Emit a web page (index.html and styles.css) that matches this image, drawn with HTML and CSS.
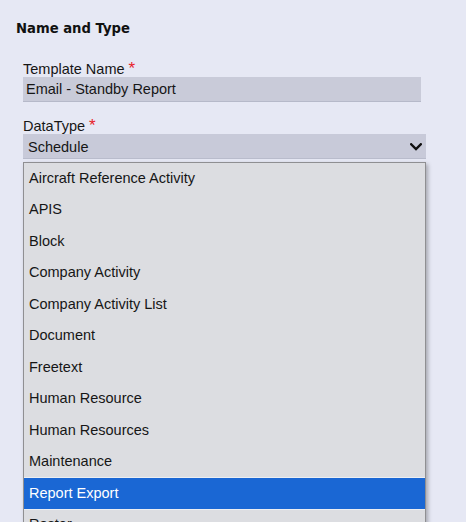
FILE: index.html
```html
<!DOCTYPE html>
<html>
<head>
<meta charset="utf-8">
<link rel="stylesheet" href="styles.css">
</head>
<body>
<div class="panel">
  <h2 class="title">Name and Type</h2>
  <div class="field field-name">
    <div class="label">Template Name <span class="req">*</span></div>
    <div class="input">Email - Standby Report</div>
  </div>
  <div class="field field-type">
    <div class="label">DataType <span class="req">*</span></div>
    <div class="select-wrap">
      <div class="select">
        <span>Schedule</span>
        <svg class="chev" width="12" height="8" viewBox="0 0 12 8"><path d="M1.2 1.3 L6 6 L10.8 1.3" fill="none" stroke="#111" stroke-width="2.4" stroke-linecap="square"/></svg>
      </div>
      <ul class="options">
        <li>Aircraft Reference Activity</li>
        <li>APIS</li>
        <li>Block</li>
        <li>Company Activity</li>
        <li>Company Activity List</li>
        <li>Document</li>
        <li>Freetext</li>
        <li>Human Resource</li>
        <li>Human Resources</li>
        <li>Maintenance</li>
        <li class="active">Report Export</li>
        <li>Roster</li>
        <li>Schedule</li>
      </ul>
    </div>
  </div>
</div>
</body>
</html>
```
FILE: styles.css
```css
html, body {
  margin: 0;
  padding: 0;
  overflow: hidden;
  height: 522px;
}
body {
  background: #e6e8f4;
  font-family: "Liberation Sans", Arial, sans-serif;
  font-size: 14.5px;
  color: #161616;
}
.panel {
  padding: 21px 0 0 0;
}
.title {
  margin: 0 0 0 16px;
  font-family: "DejaVu Sans", Verdana, sans-serif;
  font-size: 13.2px;
  line-height: 16px;
  font-weight: bold;
  color: #111;
}
.field {
  margin-left: 23px;
}
.field-name {
  margin-top: 24px;
}
.field-type {
  margin-top: 16px;
}
.label {
  line-height: 16px;
}
.req {
  color: #e8202a;
  font-size: 17px;
  line-height: 14px;
}
.input {
  width: 395px;
  height: 24px;
  line-height: 24px;
  padding-left: 3px;
  background: #c9cbd9;
  border-bottom: 1px solid #b6b9c9;
}
.select-wrap {
  position: relative;
  width: 403px;
}
.select {
  height: 24px;
  padding: 0 5px 0 5px;
  display: flex;
  align-items: center;
  justify-content: space-between;
  background: #c8cad9;
  border-bottom: 1px solid #b9bccc;
}
.select span {
  line-height: 24px;
  padding-top: 1px;
}
.chev {
  margin-top: 2px;
  margin-right: -1px;
}
.options {
  position: absolute;
  left: 0;
  top: 27.5px;
  width: 401px;
  margin: 0;
  padding: 0;
  list-style: none;
  background: #dcdde1;
  border: 1px solid #8f8f92;
  box-shadow: 2px 2px 4px rgba(0, 0, 0, 0.28);
}
.options li {
  height: 31.5px;
  line-height: 31.5px;
  padding-left: 5px;
}
.options li.active {
  background: #1a67d4;
  color: #ffffff;
  box-shadow: 0 -1px 0 #eceef2, 0 1px 0 #eceef2;
}
```
